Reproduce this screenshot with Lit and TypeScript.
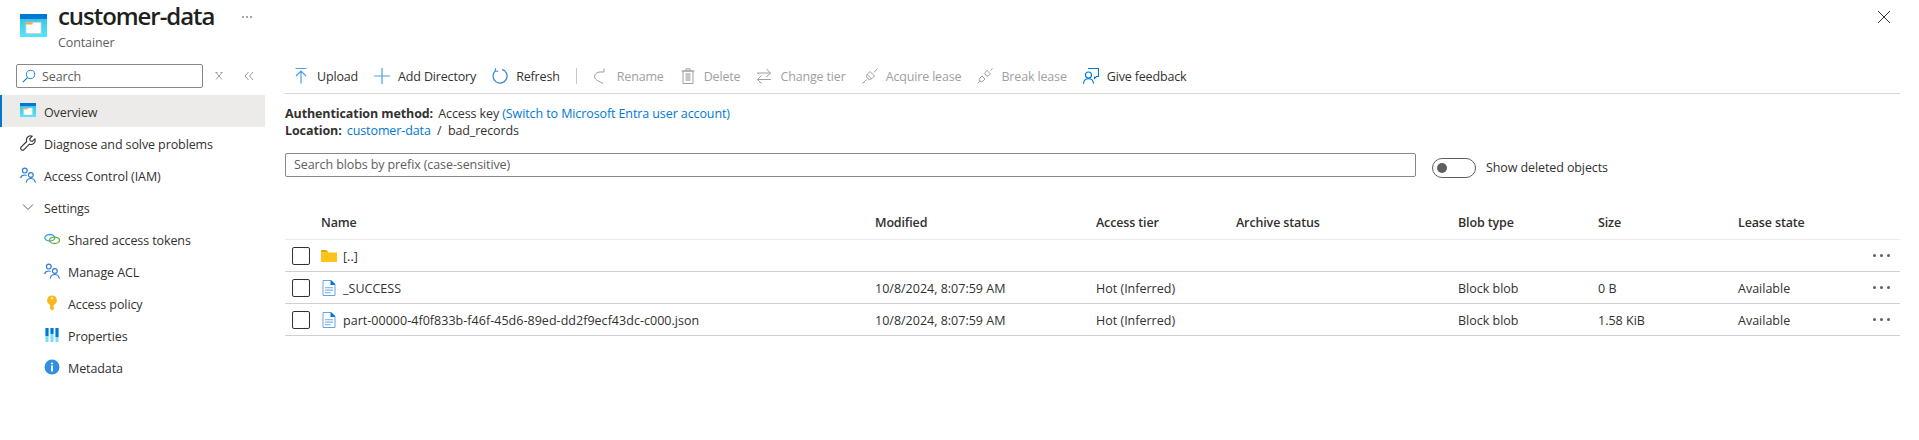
import { LitElement, css, html, svg } from 'lit';
import { customElement } from 'lit/decorators.js';

const ICONS: Record<string, unknown> = {
  container: svg`<defs><linearGradient id="cg" x1="0" y1="0" x2="0" y2="1"><stop offset="0" stop-color="#32bedd"/><stop offset="1" stop-color="#50e6ff"/></linearGradient></defs><rect x="0" y="0" width="16" height="14" fill="url(#cg)"/><rect x="0" y="0" width="16" height="3" fill="#0078d4"/><rect x="3.500" y="5" width="9" height="7" fill="#fff" stroke="#c8c6c4" stroke-width=".5"/><rect x="3.500" y="5" width="4" height="1.400" fill="#f2a65a"/>`,
  wrench: svg`<path d="M10.600 .8a4.200 4.200 0 0 0-3.900 5.700L1.300 11.900a1.900 1.900 0 0 0 2.700 2.700l5.400-5.400a4.200 4.200 0 0 0 5.500-5.300L12.300 6.500l-2-.6-.6-2 2.500-2.700a4.200 4.200 0 0 0-1.600-.4z" fill="none" stroke="#323130" stroke-width="1.100"/>`,
  people: svg`<g fill="none" stroke="#2f7ed8" stroke-width="1.200"><circle cx="4.800" cy="3.600" r="2.400"/><circle cx="10.800" cy="8" r="2.400"/><path d="M.6 11c.5-2 2-3 4.200-3 .7 0 1.300.1 1.800.4"/><path d="M6.300 15.500c.3-2.600 2-4 4.500-4s4.200 1.400 4.500 4"/></g>`,
  chevron: svg`<path d="M3 5.500l5 5 5-5" fill="none" stroke="#605e5c"/>`,
  link: svg`<g fill="none" stroke-width="1.300"><ellipse cx="5.800" cy="6.700" rx="5" ry="3.200" stroke="#3aa0e8"/><ellipse cx="10.500" cy="9.300" rx="5" ry="3.200" stroke="#6bb02e"/></g>`,
  key: svg`<path d="M8 .5a4.800 4.800 0 0 0-2 9.200v3.800l2 2.200 2-2.200v-1.200l-.9-.9.900-.9V9.700A4.800 4.800 0 0 0 8 .5z" fill="#f8b91c"/><circle cx="8" cy="3.300" r="1" fill="#fff"/>`,
  props: svg`<rect x="1.500" y="1" width="3" height="14" fill="#7fdcf5"/><rect x="6.500" y="1" width="3" height="14" fill="#7fdcf5"/><rect x="11.500" y="1" width="3" height="14" fill="#7fdcf5"/><rect x="1.500" y="1" width="3" height="8" fill="#0078d4"/><rect x="6.500" y="1" width="3" height="6" fill="#0078d4"/><rect x="11.500" y="1" width="3" height="9" fill="#0078d4"/>`,
  info: svg`<circle cx="8" cy="8" r="7.500" fill="#2f8fe0"/><circle cx="8" cy="4.500" r="1.100" fill="#fff"/><rect x="7" y="6.500" width="2" height="6" fill="#fff"/>`,
  upload: svg`<path d="M2.500 .5h11M8 3v12.500M3 8 8 3l5 5" fill="none" stroke="#4a9fe3" stroke-width="1.200"/>`,
  plus: svg`<path d="M8 0v16M0 8h16" fill="none" stroke="#4a9fe3" stroke-width="1.200"/>`,
  refresh: svg`<path d="M10 1.300A7 7 0 1 1 3.300 2.900" fill="none" stroke="#2a86d8" stroke-width="1.200"/><path d="M3.300 .2v3h3" fill="none" stroke="#2a86d8"/>`,
  rename: svg`<path d="M11 .5v3.500H7C4 4 1.500 6 1.500 8.500c0 2 1.500 3.200 3 4L10 15.500" fill="none" stroke="#a19f9d"/>`,
  trash: svg`<path d="M3 3h10v12.500H3zM1.500 3h13M6 3V.8h4V3" fill="none" stroke="#a19f9d"/><rect x="5.500" y="5" width="5" height="8" fill="#c8c6c4"/>`,
  swap: svg`<path d="M1 5h13.500M10.500 1l4 4-4 4M15 11.500H1.500M5.500 7.500l-4 4 4 4" fill="none" stroke="#a19f9d"/>`,
  plug: svg`<path d="M.5 15.500 4.500 11.500M12 4.500 15.500.5M5 6.500l4.500 4.500M8 3.500l4.500 4.500-2.500 2.500a3 3 0 0 1-4.500-4.500z" fill="none" stroke="#a19f9d"/>`,
  broken: svg`<path d="M.5 15.500 3 13M5 8l3 3-2 2a2 2 0 0 1-3-3zM10 2.500l3.500 3.500-1.500 1.500a2.500 2.500 0 0 1-3.500-3.500zM13.500 2.500 15.500.5" fill="none" stroke="#a19f9d"/>`,
  feedback: svg`<g fill="none" stroke="#0078d4" stroke-width="1.100"><path d="M5 .5h10.500v8h-2l-2 2V8.500"/><circle cx="5.500" cy="7" r="3"/><path d="M.5 15.800c.2-3 2.200-5 5-5s4.800 2 5 5"/></g>`,
  folder: svg`<path d="M0 3h6l1.500 1.500H16V14H0z" fill="#fcc419"/><path d="M0 2h5.500l1.500 2H0z" fill="#e8a80c"/>`,
  file: svg`<path d="M2 .5h8l4 4v11H2z" fill="#fff" stroke="#5ea8e0"/><path d="M9.500 .5h1l3.500 3.500v1H9.500z" fill="#0078d4"/><rect x="4" y="7" width="8" height="1.300" fill="#8cbce4"/><rect x="4" y="9.500" width="8" height="1.300" fill="#8cbce4"/><rect x="4" y="12" width="5.500" height="1.300" fill="#8cbce4"/>`,
  search: svg`<circle cx="9.800" cy="6.200" r="4.700" fill="none" stroke="#0078d4"/><path d="M6.500 9.500 1 15" stroke="#0078d4" stroke-width="1.200"/>`,
};

const icon = (name: string, size = 16) =>
  html`<svg class="ico" width=${size} height=${size} viewBox="0 0 16 16">${ICONS[name]}</svg>`;

const TOOLS = [
  { label: 'Upload', icon: 'upload' },
  { label: 'Add Directory', icon: 'plus' },
  { label: 'Refresh', icon: 'refresh' },
  { sep: true },
  { label: 'Rename', icon: 'rename', off: true },
  { label: 'Delete', icon: 'trash', off: true },
  { label: 'Change tier', icon: 'swap', off: true },
  { label: 'Acquire lease', icon: 'plug', off: true },
  { label: 'Break lease', icon: 'broken', off: true },
  { label: 'Give feedback', icon: 'feedback' },
];

const NAV = [
  { label: 'Overview', icon: 'container', active: true },
  { label: 'Diagnose and solve problems', icon: 'wrench' },
  { label: 'Access Control (IAM)', icon: 'people' },
  { label: 'Settings', icon: 'chevron' },
  { label: 'Shared access tokens', icon: 'link', sub: true },
  { label: 'Manage ACL', icon: 'people', sub: true },
  { label: 'Access policy', icon: 'key', sub: true },
  { label: 'Properties', icon: 'props', sub: true },
  { label: 'Metadata', icon: 'info', sub: true },
];

const COLUMNS = ['Name', 'Modified', 'Access tier', 'Archive status', 'Blob type', 'Size', 'Lease state'];

const ROWS = [
  { name: '[..]', icon: 'folder', cells: ['', '', '', '', '', ''] },
  { name: '_SUCCESS', icon: 'file', cells: ['10/8/2024, 8:07:59 AM', 'Hot (Inferred)', '', 'Block blob', '0 B', 'Available'] },
  { name: 'part-00000-4f0f833b-f46f-45d6-89ed-dd2f9ecf43dc-c000.json', icon: 'file', cells: ['10/8/2024, 8:07:59 AM', 'Hot (Inferred)', '', 'Block blob', '1.58 KiB', 'Available'] },
];

@customElement('app-root')
export class AppRoot extends LitElement {
  static styles = css`
    :host {
      display: block;
      height: 440px;
      overflow: hidden;
      background: #fff;
      color: #323130;
      font: 12.5px/16px 'Open Sans', 'Noto Sans', sans-serif;
      letter-spacing: -0.1px;
    }
    .ico { display: block; flex: none; }
    .header {
      display: flex;
      align-items: flex-start;
      height: 64px;
      padding: 0 28px 0 20px;
      box-sizing: border-box;
    }
    .logo { margin: 14px 11px 0 0; }
    .title { font-size: 24px; line-height: 32px; letter-spacing: -1.05px; color: #201f1e; font-weight: 600; }
    .subtitle { color: #605e5c; margin-top: 3px; }
    .more-head { display: flex; gap: 2px; margin: 16px 0 0 28px; }
    .more-head i { width: 2px; height: 2px; border-radius: 50%; background: #8a8886; }
    .close { margin-left: auto; margin-top: 10px; }
    .body { display: flex; }
    .side { width: 265px; flex: none; }
    .side-search { display: flex; align-items: center; gap: 10px; padding: 0 0 7px 16px; }
    .search-box {
      width: 187px;
      height: 24px;
      box-sizing: border-box;
      border: 1px solid #8a8886;
      border-radius: 2px;
      display: flex;
      align-items: center;
      gap: 6px;
      padding-left: 5px;
      color: #605e5c;
    }
    .search-box span { padding-top: 2px; }
    .side-btns { display: flex; gap: 18px; }
    .nav {
      height: 32px;
      display: flex;
      align-items: center;
      gap: 8px;
      padding-left: 20px;
      box-sizing: border-box;
    }
    .nav span { padding-top: 3px; }
    .nav.active { background: #edebe9; border-left: 2px solid #0078d4; padding-left: 18px; }
    .nav.sub { padding-left: 44px; }
    .main { flex: 1; padding-right: 19px; padding-left: 20px; min-width: 0; }
    .toolbar {
      display: flex;
      align-items: center;
      height: 30px;
      box-sizing: border-box;
      padding: 0 0 6px 8px;
      gap: 16px;
      border-bottom: 1px solid #d6d6d6;
    }
    .tool { display: flex; align-items: center; gap: 8px; white-space: nowrap; }
    .tool span { padding-top: 3px; letter-spacing: -0.16px; }
    .tool.off { color: #a19f9d; }
    .sep { width: 1px; height: 16px; background: #c8c6c4; }
    .meta { margin-top: 11px; line-height: 17px; }
    .meta b { font-weight: 700; margin-right: 2px; }
    .meta a { color: #0078d4; text-decoration: none; }
    .filter { display: flex; align-items: flex-start; gap: 16px; margin-top: 14px; }
    .filter-box {
      flex: 1;
      height: 24px;
      box-sizing: border-box;
      border: 1px solid #8a8886;
      border-radius: 2px;
      padding: 3px 8px;
      color: #605e5c;
    }
    .toggle-wrap { display: flex; align-items: center; gap: 10px; width: 468px; flex: none; margin-top: 5px; }
    .toggle {
      width: 44px;
      height: 20px;
      box-sizing: border-box;
      border: 1px solid #605e5c;
      border-radius: 10px;
      display: flex;
      align-items: center;
      padding-left: 4px;
    }
    .toggle i { width: 10px; height: 10px; border-radius: 50%; background: #605e5c; }
    .table { margin-top: 30px; }
    .row {
      display: grid;
      grid-template-columns: 36px 554px 221px 140px 222px 140px 140px 100px 1fr;
      align-items: center;
      height: 32px;
      box-sizing: border-box;
      border-bottom: 1px solid #d2d0ce;
      letter-spacing: 0;
    }
    .row.head { border-bottom-color: #edebe9; font-weight: 600; letter-spacing: -0.14px; padding-bottom: 2px; }
    .cell { padding-top: 3px; }
    .check {
      width: 18px;
      height: 18px;
      box-sizing: border-box;
      border: 1px solid #323130;
      border-radius: 2px;
      margin-left: 7px;
    }
    .name { display: flex; align-items: center; gap: 6px; }
    .name span { padding-top: 3px; letter-spacing: 0.03px; }
    .dots { display: flex; justify-content: flex-end; gap: 4px; padding-right: 10px; }
    .dots i { width: 3px; height: 3px; border-radius: 50%; background: #605e5c; }
  `;

  render() {
    return html`
      <div class="header">
        <svg class="ico logo" width="27" height="23" viewBox="0 0 16 14" preserveAspectRatio="none">${ICONS.container}</svg>
        <div>
          <div class="title">customer-data</div>
          <div class="subtitle">Container</div>
        </div>
        <div class="more-head"><i></i><i></i><i></i></div>
        <svg class="ico close" width="14" height="14" viewBox="0 0 14 14"><path d="M1 1l12 12M13 1 1 13" stroke="#323130" fill="none"/></svg>
      </div>
      <div class="body">
        <div class="side">
          <div class="side-search">
            <div class="search-box">${icon('search', 14)}<span>Search</span></div>
            <div class="side-btns">
              <svg class="ico" width="12" height="12" viewBox="0 0 12 12"><path d="M2.500 2.500h2M7.500 2.500h2M3 2.500l6 7M9 2.500l-6 7" fill="none" stroke="#8a8886" stroke-width=".8"/></svg>
              <svg class="ico" width="12" height="12" viewBox="0 0 12 12"><path d="M5.500 2 2 6l3.500 4M10 2 6.500 6l3.500 4" fill="none" stroke="#8a8886" stroke-width=".9"/></svg>
            </div>
          </div>
          ${NAV.map(
            (n) => html`<div class="nav ${n.active ? 'active' : ''} ${n.sub ? 'sub' : ''}">${icon(n.icon)}<span>${n.label}</span></div>`
          )}
        </div>
        <div class="main">
          <div class="toolbar">
            ${TOOLS.map((t) =>
              t.sep
                ? html`<div class="sep"></div>`
                : html`<div class="tool ${t.off ? 'off' : ''}">${icon(t.icon!)}<span>${t.label}</span></div>`
            )}
          </div>
          <div class="meta">
            <div><b>Authentication method:</b> Access key <a>(Switch to Microsoft Entra user account)</a></div>
            <div><b>Location:</b> <a>customer-data</a> &nbsp;/&nbsp; bad_records</div>
          </div>
          <div class="filter">
            <div class="filter-box">Search blobs by prefix (case-sensitive)</div>
            <div class="toggle-wrap">
              <div class="toggle"><i></i></div>
              <span>Show deleted objects</span>
            </div>
          </div>
          <div class="table">
            <div class="row head">
              <div></div>
              ${COLUMNS.map((c) => html`<div>${c}</div>`)}
              <div></div>
            </div>
            ${ROWS.map(
              (r) => html`<div class="row">
                <div class="check"></div>
                <div class="name">${icon(r.icon)}<span>${r.name}</span></div>
                ${r.cells.map((c) => html`<div class="cell">${c}</div>`)}
                <div class="dots"><i></i><i></i><i></i></div>
              </div>`
            )}
          </div>
        </div>
      </div>
    `;
  }
}
